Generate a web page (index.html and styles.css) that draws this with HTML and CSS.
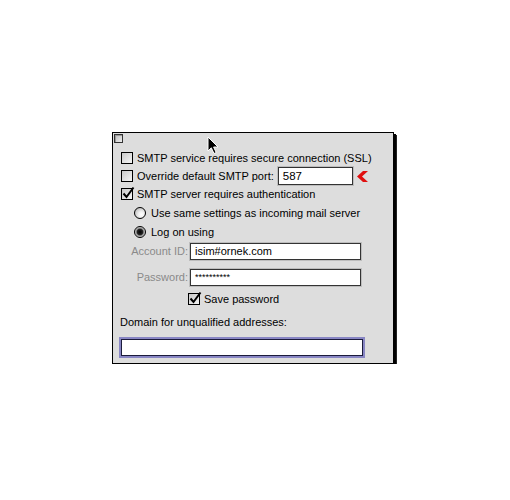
FILE: index.html
```html
<!DOCTYPE html>
<html lang="en">
<head>
    <meta charset="UTF-8">
    <title>SMTP Options</title>
    <link rel="stylesheet" href="styles.css">
</head>
<body>
    <div class="dialog">
        <div class="close-box"></div>

        <div class="row first">
            <span class="check"></span>
            <span class="label">SMTP service requires secure connection (SSL)</span>
        </div>
        <div class="row">
            <span class="check"></span>
            <span class="label">Override default SMTP port:</span>
            <span class="field port">587</span>
            <svg class="marker" width="12" height="11" viewBox="0 0 12 11">
                <polygon points="11,0 5,5.5 11,11 6,11 0,5.5 6,0" fill="#e01010"/>
            </svg>
        </div>
        <div class="row">
            <span class="check checked">
                <svg width="14" height="14" viewBox="0 0 14 14"><path d="M2.5 7.5 L5.5 11 L12.5 1.5" fill="none" stroke="#000" stroke-width="2"/></svg>
            </span>
            <span class="label">SMTP server requires authentication</span>
        </div>
        <div class="row indent">
            <span class="radio"></span>
            <span class="label">Use same settings as incoming mail server</span>
        </div>
        <div class="row indent">
            <span class="radio on"></span>
            <span class="label">Log on using</span>
        </div>

        <div class="row field-row account">
            <span class="field-label">Account ID:</span>
            <span class="field wide">isim#ornek.com</span>
        </div>
        <div class="row field-row password">
            <span class="field-label">Password:</span>
            <span class="field wide secret">**********</span>
        </div>
        <div class="row save">
            <span class="check checked">
                <svg width="14" height="14" viewBox="0 0 14 14"><path d="M2.5 7.5 L5.5 11 L12.5 1.5" fill="none" stroke="#000" stroke-width="2"/></svg>
            </span>
            <span class="label">Save password</span>
        </div>

        <div class="domain-label">Domain for unqualified addresses:</div>
        <div class="field domain"></div>
    </div>

    <svg class="cursor" width="13" height="19" viewBox="0 0 13 19">
        <path d="M1 1 L1 15 L4.3 11.8 L7 17.5 L9.2 16.5 L6.6 11 L11 11 Z" fill="#000" stroke="#fff" stroke-width="1"/>
    </svg>
</body>
</html>
```

FILE: styles.css
```css
body {
    margin: 0;
    background: #fff;
    font-family: "Liberation Sans", Arial, sans-serif;
    font-size: 11px;
    color: #000;
}
.dialog {
    margin: 132px 0 0 112px;
    width: 280px;
    height: 230px;
    border: 1px solid #000;
    box-shadow: 2px 2px 0 #000, 3px 3px 0 #222;
    background: #dddddd;
    display: flex;
    flex-direction: column;
}
.close-box {
    width: 7px;
    height: 7px;
    margin: 1px 0 0 1px;
    border: 1px solid #333;
    background: linear-gradient(135deg, #bbb, #eee);
    box-shadow: inset 1px 1px 0 #999;
}
.row {
    display: flex;
    align-items: center;
    height: 18px;
    padding-left: 8px;
}
.row.first {
    margin-top: 6px;
}
.row.indent {
    padding-left: 21px;
    margin-top: 1px;
}
.row.indent .label {
    margin-left: 5px;
}
.label {
    margin-left: 4px;
    white-space: nowrap;
}
.check {
    position: relative;
    width: 10px;
    height: 10px;
    border: 1px solid #000;
    background: linear-gradient(135deg, #c8c8c8, #f6f6f6);
    flex-shrink: 0;
}
.check svg {
    position: absolute;
    left: -1px;
    top: -3px;
}
.radio {
    width: 10px;
    height: 10px;
    border: 1px solid #000;
    border-radius: 50%;
    background: radial-gradient(circle at 65% 65%, #fff 0, #f2f2f2 30%, #a8a8a8 100%);
    flex-shrink: 0;
}
.radio.on {
    background: radial-gradient(circle at 50% 50%, #000 0, #222 40%, #888 52%, #f0f0f0 80%);
}
.field {
    box-sizing: border-box;
    background: #fff;
    border: 1px solid #333;
    box-shadow: 0 0 0 1px #bdbdbd;
    padding: 0 4px;
    line-height: 16px;
    height: 18px;
    white-space: nowrap;
}
.port {
    width: 75px;
    margin-left: 4px;
    font-size: 11.5px;
}
.marker {
    margin-left: 4px;
}
.field-row {
    padding-left: 0;
}
.account {
    margin-top: 1px;
}
.password {
    margin-top: 8px;
}
.field-label {
    width: 75px;
    text-align: right;
    color: #8a8a8a;
    margin-right: 2px;
}
.field.wide {
    width: 171px;
    height: 17px;
    line-height: 15px;
}
.secret {
    font-size: 9px;
}
.save {
    padding-left: 75px;
    margin-top: 4px;
}
.domain-label {
    margin: 8px 0 0 7px;
    height: 14px;
}
.domain {
    margin: 9px 0 0 8px;
    width: 242px;
    height: 17px;
    border: 1px solid #1c1c3c;
    box-shadow: 0 0 0 2px #8886c4;
}
.cursor {
    position: absolute;
    left: 207px;
    top: 136px;
}
```
